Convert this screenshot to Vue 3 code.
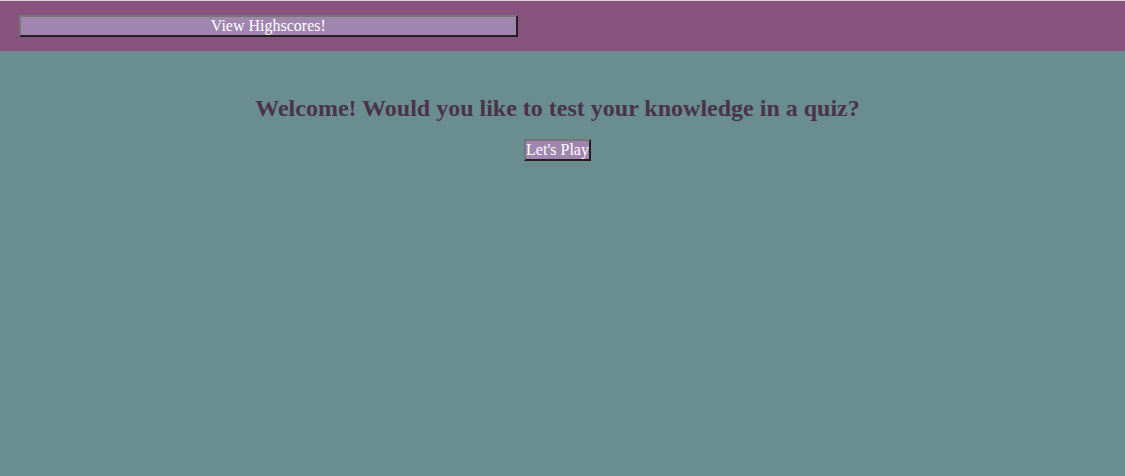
<template>
  <header class="bar">
    <button class="btn scores" type="button">View Highscores!</button>
  </header>
  <main class="quiz">
    <h1 class="title">Welcome! Would you like to test your knowledge in a quiz?</h1>
    <button class="btn" type="button">Let's Play</button>
  </main>
</template>

<script setup>
</script>

<style>
body {
  margin: 0;
  background: #6a8d90;
}
</style>

<style scoped>
.bar {
  display: flex;
  padding: 14px 22px 14px 19px;
  border-top: 1px solid #d8d8dc;
  background: #87527e;
}

.btn {
  padding: 0;
  border: 2px solid;
  border-color: #767676 #212121 #212121 #767676;
  background: #a086af;
  color: #fff;
  font: 16px/18px "Liberation Serif", "Times New Roman", serif;
}

.scores {
  width: 46%;
}

.quiz {
  display: flex;
  flex-direction: column;
  align-items: center;
  padding: 43px 10px 0 0;
}

.title {
  margin: 0 0 17px;
  color: #4b3449;
  font: bold 24px/28px "Liberation Serif", "Times New Roman", serif;
  text-align: center;
}
</style>
